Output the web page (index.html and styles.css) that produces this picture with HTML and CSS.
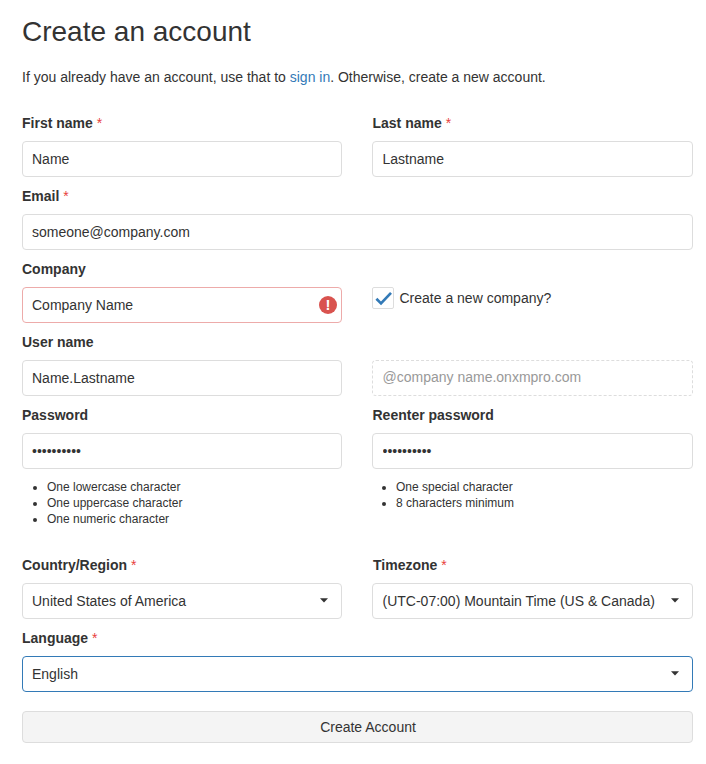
FILE: index.html
```html
<!DOCTYPE html>
<html lang="en">
<head>
<meta charset="utf-8">
<title>Create an account</title>
<link rel="stylesheet" href="styles.css">
</head>
<body>
<main class="page">
  <h1 class="title">Create an account</h1>
  <p class="intro">If you already have an account, use that to <a href="#">sign in</a>. Otherwise, create a new account.</p>
  <form class="form">
    <div class="field">
      <label class="label" for="first">First name <span class="req">*</span></label>
      <input class="control" id="first" type="text" value="Name">
    </div>
    <div class="field right">
      <label class="label" for="last">Last name <span class="req">*</span></label>
      <input class="control" id="last" type="text" value="Lastname">
    </div>
    <div class="field wide">
      <label class="label" for="email">Email <span class="req">*</span></label>
      <input class="control" id="email" type="text" value="someone@company.com">
    </div>
    <div class="field">
      <label class="label" for="company">Company</label>
      <div class="control box invalid">
        <input class="bare" id="company" type="text" value="Company Name">
        <span class="error-badge">!</span>
      </div>
    </div>
    <div class="check-row">
      <span class="checkbox">
        <svg width="20" height="20" viewBox="0 0 20 20"><path d="M3.4 10.8 8 15.4 18 4.9" fill="none" stroke="#337ab7" stroke-width="2.7"/></svg>
      </span>
      <span>Create a new company?</span>
    </div>
    <div class="field">
      <label class="label" for="user">User name</label>
      <input class="control" id="user" type="text" value="Name.Lastname">
    </div>
    <div class="field right no-label">
      <div class="control box disabled">@company name.onxmpro.com</div>
    </div>
    <div class="field">
      <label class="label" for="pw">Password</label>
      <input class="control" id="pw" type="password" value="abcdefghij">
      <ul class="rules">
        <li>One lowercase character</li>
        <li>One uppercase character</li>
        <li>One numeric character</li>
      </ul>
    </div>
    <div class="field right">
      <label class="label" for="pw2">Reenter password</label>
      <input class="control" id="pw2" type="password" value="abcdefghij">
      <ul class="rules rules-right">
        <li>One special character</li>
        <li>8 characters minimum</li>
      </ul>
    </div>
    <div class="field">
      <div class="label">Country/Region <span class="req">*</span></div>
      <div class="control box"><span>United States of America</span>
        <svg class="caret" width="8" height="5" viewBox="0 0 8 5"><path d="M0 0.3h8L4 4.6z" fill="#333"/></svg></div>
    </div>
    <div class="field right">
      <div class="label timezone">Timezone <span class="req">*</span></div>
      <div class="control box"><span>(UTC-07:00) Mountain Time (US &amp; Canada)</span>
        <svg class="caret" width="8" height="5" viewBox="0 0 8 5"><path d="M0 0.3h8L4 4.6z" fill="#333"/></svg></div>
    </div>
    <div class="field wide">
      <div class="label">Language <span class="req">*</span></div>
      <div class="control box focused"><span>English</span>
        <svg class="caret" width="8" height="5" viewBox="0 0 8 5"><path d="M0 0.3h8L4 4.6z" fill="#333"/></svg></div>
    </div>
    <button class="submit wide" type="button">Create Account</button>
  </form>
</main>
</body>
</html>
```
FILE: styles.css
```css
* {
  box-sizing: border-box;
}

body {
  margin: 0;
  background: #fff;
  color: #333;
  font: 14px/20px "Liberation Sans", Arial, sans-serif;
}

.page {
  padding: 16px 13px 0 22px;
}

.title {
  margin: 0;
  font-size: 28px;
  line-height: 31px;
  font-weight: 400;
}

.intro {
  margin: 20px 0 26px;
}

.intro a {
  color: #337ab7;
  text-decoration: none;
}

.form {
  display: grid;
  grid-template-columns: 320px 321px;
  column-gap: 30px;
  row-gap: 9px;
}

.wide {
  grid-column: 1 / -1;
}

.label {
  display: block;
  height: 20px;
  margin-bottom: 8px;
  font-weight: 700;
}

.right .label {
  padding-left: 0.5px;
}

.right .timezone {
  padding-left: 1px;
}

.req {
  color: #e8403c;
  font-weight: 400;
}

.control {
  display: block;
  width: 100%;
  height: 36px;
  padding: 0 9px;
  border: 1px solid #ddd;
  border-radius: 4px;
  background: #fff;
  color: #333;
  font: inherit;
  outline: none;
}

.right .control {
  padding-left: 9.5px;
}

.box {
  display: flex;
  align-items: center;
  justify-content: space-between;
}

.invalid {
  padding-right: 4px;
  border-color: #edabaa;
}

.bare {
  flex: 1;
  min-width: 0;
  padding: 0;
  border: 0;
  color: inherit;
  font: inherit;
  outline: none;
}

.error-badge {
  width: 18px;
  height: 18px;
  border-radius: 50%;
  background: #d9534f;
  color: #fff;
  font-size: 15px;
  line-height: 17px;
  font-weight: 700;
  text-align: center;
}

.check-row {
  display: flex;
  align-items: center;
  gap: 5.5px;
  height: 22px;
  margin-top: 28px;
}

.checkbox {
  display: flex;
  width: 22px;
  height: 22px;
  border: 1px solid #ddd;
  border-radius: 2px;
}

.no-label {
  padding-top: 28px;
}

.disabled {
  padding-bottom: 2px;
  border-style: dashed;
  color: #999;
}

.focused {
  border-color: #337ab7;
}

.caret {
  margin: 0 4px 2px 0;
}

.rules {
  height: 48px;
  margin: 10px 0 19px;
  padding-left: 25px;
  font-size: 12px;
  line-height: 16px;
}

.rules-right {
  padding-left: 24px;
}

.submit {
  height: 32px;
  margin-top: 10px;
  padding: 0 0 0 21px;
  border: 1px solid #ddd;
  border-radius: 4px;
  background: #f4f4f4;
  color: #333;
  font: inherit;
}
```
